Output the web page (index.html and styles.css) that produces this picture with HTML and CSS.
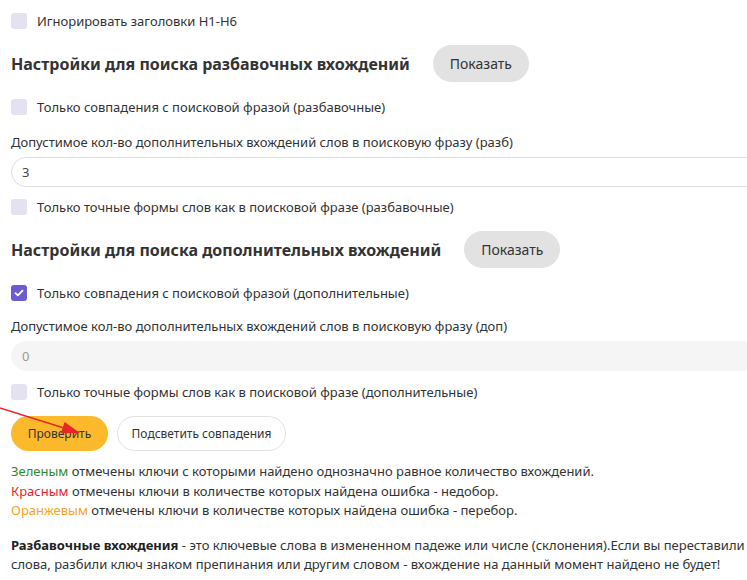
FILE: index.html
```html
<!DOCTYPE html>
<html lang="ru">
<head>
<meta charset="utf-8">
<link rel="stylesheet" href="styles.css">
</head>
<body>
<div class="page">
  <label class="check r1"><span class="box"></span><span>Игнорировать заголовки H1-H6</span></label>

  <div class="head-row h1row">
    <h2 class="heading">Настройки для поиска разбавочных вхождений</h2>
    <button class="btn-grey">Показать</button>
  </div>

  <label class="check r2"><span class="box"></span><span>Только совпадения с поисковой фразой (разбавочные)</span></label>
  <div class="field-label l1">Допустимое кол-во дополнительных вхождений слов в поисковую фразу (разб)</div>
  <div class="field">3</div>
  <label class="check r3"><span class="box"></span><span>Только точные формы слов как в поисковой фразе (разбавочные)</span></label>

  <div class="head-row h2row">
    <h2 class="heading">Настройки для поиска дополнительных вхождений</h2>
    <button class="btn-grey">Показать</button>
  </div>

  <label class="check r4"><span class="box checked"><svg width="10" height="8" viewBox="0 0 10 8"><path d="M1.5 4.2 L3.9 6.4 L8.5 1.6" fill="none" stroke="#fff" stroke-width="1.8" stroke-linecap="round" stroke-linejoin="round"/></svg></span><span>Только совпадения с поисковой фразой (дополнительные)</span></label>
  <div class="field-label l2">Допустимое кол-во дополнительных вхождений слов в поисковую фразу (доп)</div>
  <div class="field disabled">0</div>
  <label class="check r5"><span class="box"></span><span>Только точные формы слов как в поисковой фразе (дополнительные)</span></label>

  <div class="actions">
    <button class="btn-yellow">Проверить</button>
    <button class="btn-white">Подсветить совпадения</button>
    <svg class="arrow" width="90" height="40" viewBox="0 0 90 40"><line x1="0" y1="8" x2="64" y2="28" stroke="#e8262a" stroke-width="1.5"/><path d="M80 33 L61 33.3 L64.6 21.9 Z" fill="#e8262a"/></svg>
  </div>

  <div class="legend">
    <div><span class="green">Зеленым</span> отмечены ключи с которыми найдено однозначно равное количество вхождений.</div>
    <div><span class="red">Красным</span> отмечены ключи в количестве которых найдена ошибка - недобор.</div>
    <div><span class="orange">Оранжевым</span> отмечены ключи в количестве которых найдена ошибка - перебор.</div>
  </div>

  <p class="note"><b>Разбавочные вхождения</b> - это ключевые слова в измененном падеже или числе (склонения).Если вы переставили слова, разбили ключ знаком препинания или другим словом - вхождение на данный момент найдено не будет!</p>
</div>
</body>
</html>
```
FILE: styles.css
```css
html, body { margin: 0; padding: 0; overflow: hidden; background: #fff; }
body { font-family: "Noto Sans", "Open Sans", sans-serif; font-size: 13px; color: #333; }
.page { position: relative; padding: 11px 0 0 11px; width: 760px; }
.check { display: flex; align-items: center; gap: 10px; height: 20px; line-height: 20px; }
.box { width: 16px; height: 16px; border-radius: 3px; background: #e4e2f0; display: flex; align-items: center; justify-content: center; flex: none; }
.box.checked { background: #6c5ccf; }
.head-row { display: flex; align-items: center; gap: 23px; height: 37px; }
.heading { margin: 0; font-size: 16px; font-weight: 700; color: #333; }
.btn-grey { height: 37px; width: 96px; border: none; border-radius: 19px; background: #e2e2e2; color: #333; font: inherit; font-size: 14px; }
.h1row { margin-top: 14px; }
.r2 { margin-top: 15px; }
.field-label { height: 20px; line-height: 20px; }
.l1 { margin-top: 15px; }
.field { margin-top: 5px; height: 28px; line-height: 28px; border: 1px solid #dedede; border-radius: 15px; padding-left: 10px; color: #444; }
.field.disabled { background: #f5f5f5; border-color: #f5f5f5; color: #999; }
.r3 { margin-top: 10px; }
.h2row { margin-top: 14px; }
.r4 { margin-top: 15px; }
.l2 { margin-top: 13px; }
.r5 { margin-top: 11px; }
.actions { display: flex; gap: 9px; margin-top: 14px; }
.actions button { height: 35px; border-radius: 18px; font: inherit; font-size: 12px; color: #333; }
.btn-yellow { width: 97px; border: none; background: #fbb92b; }
.btn-white { width: 169px; border: 1px solid #e2e2e2; background: #fff; }
.arrow { position: absolute; left: 0; top: 400px; }
.legend { margin-top: 11px; line-height: 19.5px; }
.green { color: #2e8b2e; }
.red { color: #e8262a; }
.orange { color: #f7a325; }
.note { margin: 15px 0 0; line-height: 19.5px; width: 745px; }
.note b { color: #222; }
```
